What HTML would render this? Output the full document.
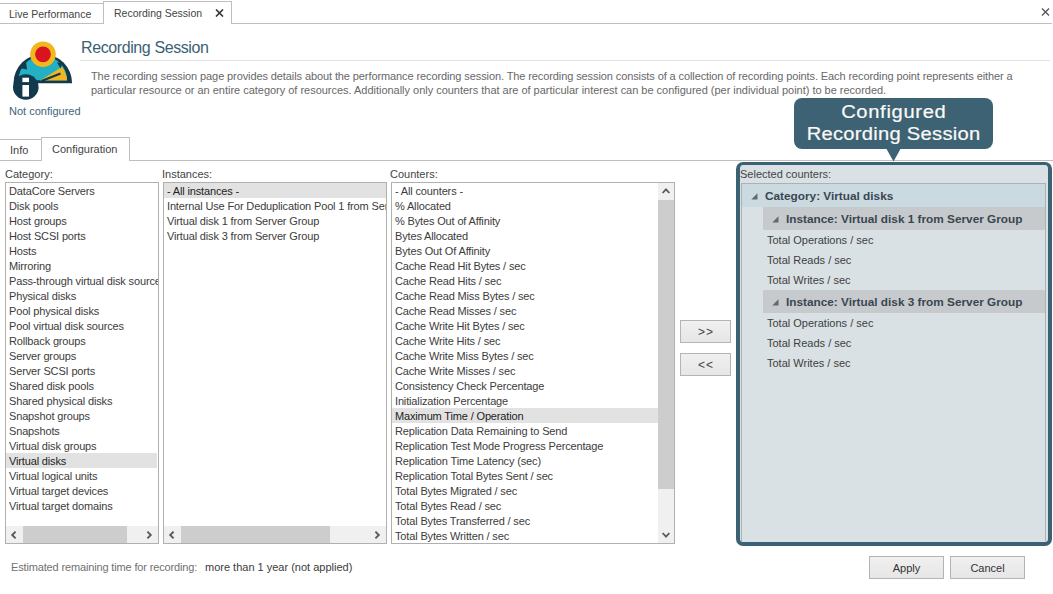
<!DOCTYPE html>
<html><head><meta charset="utf-8">
<style>
*{box-sizing:border-box;margin:0;padding:0}
html,body{width:1053px;height:594px;overflow:hidden;background:#fff}
body{position:relative;font-family:"Liberation Sans",sans-serif;font-size:11px;color:#3c3c3c}
.a{position:absolute;white-space:nowrap}
.t{position:absolute;white-space:nowrap;line-height:15px;height:15px}
.lb{position:absolute;border:1px solid #b0b0b0;background:#fff;overflow:hidden}
.row{position:absolute;left:0;height:15px;line-height:15px;padding-top:1px;white-space:nowrap;letter-spacing:-0.15px}
.hl{background:#e2e2e2}
.btn{position:absolute;background:linear-gradient(#f0f0f0,#e6e6e6);border:1px solid #b4b4b4;text-align:center;color:#333}
.sb{position:absolute;background:#f0f0f0}
.th{position:absolute;background:#cdcdcd}
.tr{position:absolute;left:25px;height:20px;line-height:20px;color:#3e3e3e}
</style></head><body>

<!-- top tabs -->
<div class="a" style="left:0;top:3px;width:104px;height:21px;border:1px solid #bfbfbf;border-left:none;background:#fff"></div>
<div class="a" style="left:103px;top:1px;width:129px;height:23px;border:1px solid #bfbfbf;border-bottom:none;background:#fff"></div>
<div class="a" style="left:232px;top:23px;width:820px;height:1px;background:#bfbfbf"></div>
<div class="t" style="left:9px;top:7px;font-size:10.5px;color:#444">Live Performance</div>
<div class="t" style="left:114px;top:5.5px;font-size:10.5px;color:#444">Recording Session</div>
<svg class="a" style="left:215px;top:9px" width="9" height="8" viewBox="0 0 9 8"><path d="M1 0.5L8 7.5M8 0.5L1 7.5" stroke="#333" stroke-width="1.6"/></svg>
<svg class="a" style="left:1041px;top:8px" width="9" height="8" viewBox="0 0 9 8"><path d="M1 0.5L8 7.5M8 0.5L1 7.5" stroke="#555" stroke-width="1.3"/></svg>

<!-- icon -->
<svg class="a" style="left:0;top:30px" width="80" height="75" viewBox="0 30 80 75">
  <path d="M13.5 83.3 A29.3 29.3 0 0 1 72.1 83.3 Z" fill="#123a4c"/>
  <path d="M18.5 80.3 A24.3 24.3 0 0 1 67.1 80.3 Z" fill="#24b0c4"/>
  <path d="M40 80.5 L62 67 A24.3 24.3 0 0 1 67.1 80.5 Z" fill="#f1b624"/>
  <path d="M41.5 81 L60.5 73.5" stroke="#123a4c" stroke-width="2.4"/>
  <path d="M19.5 68 L26 62 L27 69.5 Z M57 62.5 L62.5 63 L60.5 68.5 Z" fill="#123a4c"/>
  <circle cx="43" cy="54.3" r="12.8" fill="#f2b71e"/>
  <circle cx="43" cy="54.3" r="7.9" fill="#d8141e"/>
  <circle cx="25.8" cy="87" r="12.8" fill="#123a4c"/>
  <rect x="22.4" y="77.7" width="6.6" height="4.4" fill="#fff"/>
  <rect x="22.4" y="85" width="6.6" height="11.6" fill="#fff"/>
</svg>
<div class="t" style="left:9px;top:104px;font-size:11px;color:#3d6478">Not configured</div>

<!-- header -->
<div class="a" style="left:81px;top:37.5px;font-size:16px;line-height:20px;color:#3a6273;letter-spacing:-0.4px">Recording Session</div>
<div class="a" style="left:80px;top:60px;width:970px;height:1px;background:#e2e2e2"></div>
<div class="t" style="left:91px;top:69px;color:#686868;letter-spacing:-0.1px">The recording session page provides details about the performance recording session. The recording session consists of a collection of recording points. Each recording point represents either a</div>
<div class="t" style="left:91px;top:83px;color:#686868;letter-spacing:-0.02px">particular resource or an entire category of resources. Additionally only counters that are of particular interest can be configured (per individual point) to be recorded.</div>

<!-- info/config tabs -->
<div class="a" style="left:0;top:139px;width:42px;height:22px;border:1px solid #bfbfbf;border-left:none;background:#fff"></div>
<div class="a" style="left:41px;top:137px;width:89px;height:24px;border:1px solid #bfbfbf;border-bottom:none;background:#fff"></div>
<div class="a" style="left:130px;top:160px;width:923px;height:1px;background:#bfbfbf"></div>
<div class="t" style="left:10px;top:143px;color:#444">Info</div>
<div class="t" style="left:52px;top:142px;color:#444">Configuration</div>

<!-- labels -->
<div class="t" style="left:5px;top:167px;color:#444">Category:</div>
<div class="t" style="left:162px;top:167px;color:#444">Instances:</div>
<div class="t" style="left:390px;top:167px;color:#444">Counters:</div>

<!-- category list -->
<div class="lb" style="left:5px;top:182px;width:154px;height:362px">
  <div class="row" style="top:0;left:3px">DataCore Servers</div>
  <div class="row" style="top:15px;left:3px">Disk pools</div>
  <div class="row" style="top:30px;left:3px">Host groups</div>
  <div class="row" style="top:45px;left:3px">Host SCSI ports</div>
  <div class="row" style="top:60px;left:3px">Hosts</div>
  <div class="row" style="top:75px;left:3px">Mirroring</div>
  <div class="row" style="top:90px;left:3px">Pass-through virtual disk sources</div>
  <div class="row" style="top:105px;left:3px">Physical disks</div>
  <div class="row" style="top:120px;left:3px">Pool physical disks</div>
  <div class="row" style="top:135px;left:3px">Pool virtual disk sources</div>
  <div class="row" style="top:150px;left:3px">Rollback groups</div>
  <div class="row" style="top:165px;left:3px">Server groups</div>
  <div class="row" style="top:180px;left:3px">Server SCSI ports</div>
  <div class="row" style="top:195px;left:3px">Shared disk pools</div>
  <div class="row" style="top:210px;left:3px">Shared physical disks</div>
  <div class="row" style="top:225px;left:3px">Snapshot groups</div>
  <div class="row" style="top:240px;left:3px">Snapshots</div>
  <div class="row" style="top:255px;left:3px">Virtual disk groups</div>
  <div class="row hl" style="top:270px;left:0;width:151px;padding-left:3px;color:#222">Virtual disks</div>
  <div class="row" style="top:285px;left:3px">Virtual logical units</div>
  <div class="row" style="top:300px;left:3px">Virtual target devices</div>
  <div class="row" style="top:315px;left:3px">Virtual target domains</div>
  <div class="sb" style="left:0;top:343px;width:152px;height:18px"></div>
  <div class="th" style="left:17px;top:343px;width:104px;height:18px"></div>
</div>
<svg class="a" style="left:10px;top:530px" width="8" height="10" viewBox="0 0 8 10"><path d="M5.6 1.6L2.2 5L5.6 8.4" stroke="#5a5a5a" stroke-width="1.9" fill="none"/></svg>
<svg class="a" style="left:145px;top:530px" width="8" height="10" viewBox="0 0 8 10"><path d="M2.4 1.6L5.8 5L2.4 8.4" stroke="#5a5a5a" stroke-width="1.9" fill="none"/></svg>

<!-- instances list -->
<div class="lb" style="left:163px;top:182px;width:224px;height:362px">
  <div class="row hl" style="top:0;left:0;width:222px;padding-left:3px;color:#222">- All instances -</div>
  <div class="row" style="top:15px;left:3px">Internal Use For Deduplication Pool 1 from Server Group</div>
  <div class="row" style="top:30px;left:3px">Virtual disk 1 from Server Group</div>
  <div class="row" style="top:45px;left:3px">Virtual disk 3 from Server Group</div>
  <div class="sb" style="left:0;top:343px;width:222px;height:18px"></div>
  <div class="th" style="left:17px;top:343px;width:149px;height:18px"></div>
</div>
<svg class="a" style="left:168px;top:530px" width="8" height="10" viewBox="0 0 8 10"><path d="M5.6 1.6L2.2 5L5.6 8.4" stroke="#5a5a5a" stroke-width="1.9" fill="none"/></svg>
<svg class="a" style="left:373px;top:530px" width="8" height="10" viewBox="0 0 8 10"><path d="M2.4 1.6L5.8 5L2.4 8.4" stroke="#5a5a5a" stroke-width="1.9" fill="none"/></svg>

<!-- counters list -->
<div class="lb" style="left:391px;top:182px;width:284px;height:362px">
  <div class="row" style="top:0;left:3px">- All counters -</div>
  <div class="row" style="top:15px;left:3px">% Allocated</div>
  <div class="row" style="top:30px;left:3px">% Bytes Out of Affinity</div>
  <div class="row" style="top:45px;left:3px">Bytes Allocated</div>
  <div class="row" style="top:60px;left:3px">Bytes Out Of Affinity</div>
  <div class="row" style="top:75px;left:3px">Cache Read Hit Bytes / sec</div>
  <div class="row" style="top:90px;left:3px">Cache Read Hits / sec</div>
  <div class="row" style="top:105px;left:3px">Cache Read Miss Bytes / sec</div>
  <div class="row" style="top:120px;left:3px">Cache Read Misses / sec</div>
  <div class="row" style="top:135px;left:3px">Cache Write Hit Bytes / sec</div>
  <div class="row" style="top:150px;left:3px">Cache Write Hits / sec</div>
  <div class="row" style="top:165px;left:3px">Cache Write Miss Bytes / sec</div>
  <div class="row" style="top:180px;left:3px">Cache Write Misses / sec</div>
  <div class="row" style="top:195px;left:3px">Consistency Check Percentage</div>
  <div class="row" style="top:210px;left:3px">Initialization Percentage</div>
  <div class="row hl" style="top:225px;left:0;width:266px;padding-left:3px;color:#222">Maximum Time / Operation</div>
  <div class="row" style="top:240px;left:3px">Replication Data Remaining to Send</div>
  <div class="row" style="top:255px;left:3px">Replication Test Mode Progress Percentage</div>
  <div class="row" style="top:270px;left:3px">Replication Time Latency (sec)</div>
  <div class="row" style="top:285px;left:3px">Replication Total Bytes Sent / sec</div>
  <div class="row" style="top:300px;left:3px">Total Bytes Migrated / sec</div>
  <div class="row" style="top:315px;left:3px">Total Bytes Read / sec</div>
  <div class="row" style="top:330px;left:3px">Total Bytes Transferred / sec</div>
  <div class="row" style="top:345px;left:3px">Total Bytes Written / sec</div>
  <div class="sb" style="left:266px;top:0;width:17px;height:360px"></div>
  <div class="th" style="left:266px;top:17px;width:17px;height:289px"></div>
</div>
<svg class="a" style="left:661px;top:187px" width="10" height="8" viewBox="0 0 10 8"><path d="M1.6 6L5 2.4L8.4 6" stroke="#5a5a5a" stroke-width="1.8" fill="none"/></svg>
<svg class="a" style="left:661px;top:531px" width="10" height="8" viewBox="0 0 10 8"><path d="M1.6 2L5 5.6L8.4 2" stroke="#5a5a5a" stroke-width="1.8" fill="none"/></svg>

<!-- move buttons -->
<div class="btn" style="left:680px;top:320px;width:51px;height:23px;line-height:23px;font-size:12px;letter-spacing:1px;text-indent:1px;color:#444">&gt;&gt;</div>
<div class="btn" style="left:680px;top:353px;width:51px;height:23px;line-height:23px;font-size:12px;letter-spacing:1px;text-indent:1px;color:#444">&lt;&lt;</div>

<!-- selected counters panel -->
<div class="a" style="left:736px;top:162px;width:316px;height:384px;border:4px solid #3b6274;border-top-width:3px;border-radius:7px;background:#d9e1e5"></div>
<div class="t" style="left:740px;top:167px;color:#444">Selected counters:</div>
<div class="a" style="left:741px;top:183px;width:305px;height:358px;border:1px solid #aab2b7;border-bottom:none;background:#d9e1e5"></div>
<div class="a" style="left:742px;top:184px;width:303px;height:23px;background:#cbdae1"></div>
<div class="a" style="left:763px;top:207px;width:282px;height:23px;background:#c6cacd"></div>
<div class="a" style="left:763px;top:290px;width:282px;height:23px;background:#c6cacd"></div>
<svg class="a" style="left:751px;top:193px" width="7" height="7" viewBox="0 0 7 7"><path d="M6.5 0.3L6.5 6.5L0.3 6.5Z" fill="#5e6a72"/></svg>
<svg class="a" style="left:772px;top:216px" width="7" height="7" viewBox="0 0 7 7"><path d="M6.5 0.3L6.5 6.5L0.3 6.5Z" fill="#5e6a72"/></svg>
<svg class="a" style="left:772px;top:299px" width="7" height="7" viewBox="0 0 7 7"><path d="M6.5 0.3L6.5 6.5L0.3 6.5Z" fill="#5e6a72"/></svg>
<div class="a" style="left:765px;top:189px;font-size:11.8px;line-height:15px;font-weight:bold;color:#3a4650">Category: Virtual disks</div>
<div class="a" style="left:786px;top:212px;font-size:11.8px;line-height:15px;font-weight:bold;color:#3a4650">Instance: Virtual disk 1 from Server Group</div>
<div class="a" style="left:786px;top:295px;font-size:11.8px;line-height:15px;font-weight:bold;color:#3a4650">Instance: Virtual disk 3 from Server Group</div>
<div class="a" style="left:767px;top:230px;line-height:20px;color:#3e3e3e">Total Operations / sec</div>
<div class="a" style="left:767px;top:250px;line-height:20px;color:#3e3e3e">Total Reads / sec</div>
<div class="a" style="left:767px;top:270px;line-height:20px;color:#3e3e3e">Total Writes / sec</div>
<div class="a" style="left:767px;top:313px;line-height:20px;color:#3e3e3e">Total Operations / sec</div>
<div class="a" style="left:767px;top:333px;line-height:20px;color:#3e3e3e">Total Reads / sec</div>
<div class="a" style="left:767px;top:353px;line-height:20px;color:#3e3e3e">Total Writes / sec</div>

<!-- callout -->
<div class="a" style="left:794px;top:98px;width:199px;height:51px;background:#3d6274;border-radius:8px"></div>
<svg class="a" style="left:886px;top:148px" width="15" height="14" viewBox="0 0 15 14"><path d="M0 0L15 0L7.5 13.5Z" fill="#3d6274"/></svg>
<div class="a" style="left:794px;top:101px;width:199px;height:22px;text-align:center;color:#fbfaf6;font-size:17.5px;line-height:22px;-webkit-text-stroke:0.2px #fbfaf6"><span style="display:inline-block;transform:scaleX(1.15);letter-spacing:0.6px;margin-right:-0.6px">Configured</span></div>
<div class="a" style="left:794px;top:123px;width:199px;height:22px;text-align:center;color:#fbfaf6;font-size:17.5px;line-height:22px;-webkit-text-stroke:0.2px #fbfaf6"><span style="display:inline-block;transform:scaleX(1.15);letter-spacing:0.25px;margin-right:-0.25px">Recording Session</span></div>

<!-- bottom -->
<div class="t" style="left:11px;top:560px;color:#707070;letter-spacing:-0.15px">Estimated remaining time for recording:</div>
<div class="t" style="left:205px;top:560px;color:#3c3c3c">more than 1 year (not applied)</div>
<div class="btn" style="left:869px;top:556px;width:75px;height:23px;line-height:22px">Apply</div>
<div class="btn" style="left:950px;top:556px;width:75px;height:23px;line-height:22px">Cancel</div>

</body></html>
